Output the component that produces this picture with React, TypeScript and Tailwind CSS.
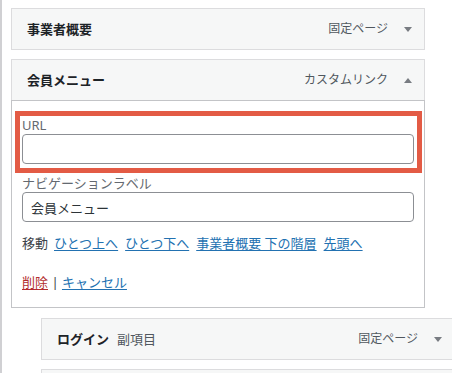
import type { ReactNode } from "react";

const font = {
  fontFamily: '"Noto Sans", "Noto Sans CJK JP", sans-serif',
};

function Arrow({ up = false }: { up?: boolean }) {
  return (
    <svg width="8" height="5" viewBox="0 0 8 5" className="shrink-0">
      {up ? (
        <path d="M0 5 L4 0 L8 5 Z" fill="#787c82" />
      ) : (
        <path d="M0 0 L8 0 L4 5 Z" fill="#787c82" />
      )}
    </svg>
  );
}

type HandleProps = {
  title: string;
  sub?: string;
  type: string;
  up?: boolean;
  className?: string;
};

function ItemHandle({ title, sub, type, up, className = "" }: HandleProps) {
  return (
    <div
      className={`flex h-[42px] w-[414px] shrink-0 items-center border border-[#dcdcde] bg-[#f6f7f7] pl-[15px] pr-[12px] ${className}`}
    >
      <span className="text-[13px] font-bold leading-[18px] text-[#1d2327]">
        {title}
      </span>
      {sub && (
        <span className="ml-[8px] text-[13px] leading-[18px] text-[#50575e]">
          {sub}
        </span>
      )}
      <span className="ml-auto mr-[16px] text-[12px] leading-[18px] text-[#50575e]">
        {type}
      </span>
      <Arrow up={up} />
    </div>
  );
}

function Link({ children, red = false }: { children: ReactNode; red?: boolean }) {
  return (
    <a
      href="#"
      className={`underline underline-offset-[2px] ${red ? "text-[#b32d2e]" : "text-[#2271b1]"}`}
    >
      {children}
    </a>
  );
}

export default function App() {
  return (
    <div
      className="h-[373px] w-[452px] overflow-hidden bg-white"
      style={font}
    >
      <div className="flex h-full flex-col border-l-2 border-[#d0d0d3] pt-[8px]">
        {/* 事業者概要 */}
        <ItemHandle title="事業者概要" type="固定ページ" className="ml-[9px]" />

        {/* 会員メニュー (開いている項目) */}
        <div className="ml-[9px] mt-[9px] w-[414px] shrink-0">
          <ItemHandle title="会員メニュー" type="カスタムリンク" up />
          <div className="-mt-px border border-[#c3c4c7] bg-white pb-[16px] pt-[10px]">
            <div className="ml-[3px] mr-[2px] border-[5px] border-[#e35b45] pb-[4px] pl-[2px] pr-[3px]">
              <div className="h-[18px] text-[13px] leading-[18px] text-[#646970]">
                URL
              </div>
              <input
                type="text"
                className="block h-[30px] w-full rounded-[4px] border border-[#8c8f94] bg-white px-[8px] text-[13px] outline-none"
              />
            </div>
            <div className="px-[10px]">
              <div className="h-[19px] text-[13px] leading-[20px] text-[#646970]">
                ナビゲーションラベル
              </div>
              <input
                type="text"
                defaultValue="会員メニュー"
                className="block h-[30px] w-[392px] rounded-[4px] border border-[#8c8f94] bg-white px-[8px] text-[13px] text-[#2c3338] outline-none"
              />
              <div className="mt-[12px] flex h-[18px] items-center gap-[7px] text-[13px] leading-[18px] text-[#3c434a]">
                <span className="mr-[-1px]">移動</span>
                <Link>ひとつ上へ</Link>
                <Link>ひとつ下へ</Link>
                <Link>事業者概要 下の階層</Link>
                <Link>先頭へ</Link>
              </div>
              <div className="mt-[21px] h-[18px] text-[13px] leading-[18px] text-[#3c434a]">
                <Link red>削除</Link> | <Link>キャンセル</Link>
              </div>
            </div>
          </div>
        </div>

        {/* ログイン 副項目 */}
        <ItemHandle
          title="ログイン"
          sub="副項目"
          type="固定ページ"
          className="ml-[39px] mt-[10px]"
        />
        <div className="ml-[39px] mt-[9px] h-[42px] w-[414px] shrink-0 border border-[#dcdcde] bg-[#f6f7f7]" />
      </div>
    </div>
  );
}
